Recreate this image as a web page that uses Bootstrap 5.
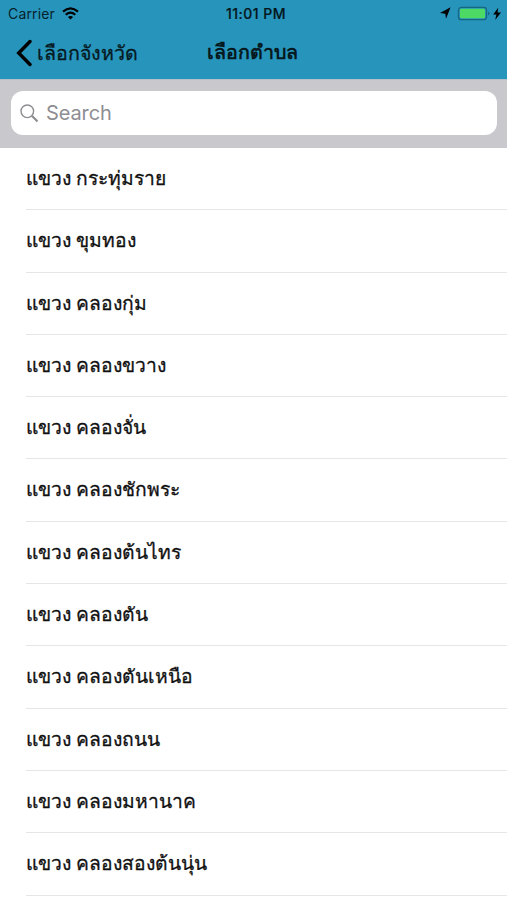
<!DOCTYPE html>
<html lang="th">
<head>
<meta charset="utf-8">
<meta name="viewport" content="width=device-width, initial-scale=1">
<title>เลือกตำบล</title>
<link rel="stylesheet" href="https://cdn.jsdelivr.net/npm/bootstrap@5.3.0/dist/css/bootstrap.min.css">
<style>
body{font-family:Inter,"Liberation Sans",sans-serif;height:900px;overflow:hidden;color:#111;background:#fff}
.top-area{background:#2795bb;height:79px;color:#000}
.status{height:27px;font-size:14px;line-height:27px;padding:0 5px 0 8px;color:#06222d;letter-spacing:.15px}
.wifi{margin-left:7px}
.clock{font-weight:500;letter-spacing:.5px;color:#04151c;padding-left:2px;-webkit-text-stroke:.2px currentColor}
.title-row{height:52px;padding-left:16px;color:#06191f}
.back-link{height:51px}
.back-label{font-size:19.6px;line-height:50px;padding-left:5px;-webkit-text-stroke:.3px currentColor}
.screen-title{font-size:19.6px;font-weight:700;line-height:50px;padding-left:69px}
.search-area{background:#c8c8cd;height:69px;padding:11px 10px 13px 11px;border-top:1px solid #b3bfc9}
.search-box{background:#fff;border-radius:12px;height:44px;padding-left:9px;color:#8e8e93}
.search-box input{font-size:20px;line-height:24px;margin:0 0 0 7px;letter-spacing:-.1px;color:#8e8e93;outline:0;background:none}
.search-box input::placeholder{color:#8e8e93;opacity:1}
.places{padding-left:25.5px}
.places .list-group-item{height:62.3px;padding:0;border:0;border-bottom:1px solid #e6e6e8;border-radius:0;font-size:19.25px;line-height:61px;color:#111;word-spacing:.4px;-webkit-text-stroke:.3px #111}
.places .list-group-item:last-child{border-bottom:1px solid #e6e6e8}
</style>
<script src="https://cdn.jsdelivr.net/npm/bootstrap@5.3.0/dist/js/bootstrap.bundle.min.js"></script>
</head>
<body>
<header class="top-area">
  <div class="status row g-0 align-items-center">
    <div class="col-4 d-flex align-items-center"><span>Carrier</span>
      <svg class="wifi" width="17" height="13" viewBox="0 0 17 13"><g fill="none" stroke="#000" stroke-width="2.1"><path d="M1 4.6Q8.5-2 16 4.6"/><path d="M3.7 7.7Q8.5 3.5 13.3 7.7"/></g><path d="M5.9 9.9Q8.5 7.9 11.1 9.9L8.5 12.6Z"/></svg>
    </div>
    <div class="col-4 text-center clock">11:01 PM</div>
    <div class="col-4 d-flex align-items-center justify-content-end">
      <svg width="62" height="15" viewBox="0 0 62 15"><path d="M10.6 1.3L6 12.8 5.3 7.7 0 7Z"/><rect x="18.5" y="1.3" width="28" height="12.4" rx="2.8" fill="none" stroke="#176783" stroke-width="1.3"/><rect x="20" y="2.8" width="25" height="9.4" rx="1.2" fill="#4cd964"/><path d="M48 5.4v4.2q1.5-.6 1.5-2.1T48 5.4Z" fill="#176783"/><path d="M58.2 1.8L53.2 8.5h3.2l-1.2 5.4L61 6.6h-3.4Z"/></svg>
    </div>
  </div>
  <nav class="title-row d-flex">
    <a href="#" class="d-flex align-items-center text-reset text-decoration-none back-link">
      <svg width="16" height="28" viewBox="0 0 16 28" fill="none" stroke="#000" stroke-width="3.4" stroke-linecap="round"><path d="M14 2.5L2.7 14 14 25.5"/></svg>
      <span class="back-label">เลือกจังหวัด</span>
    </a>
    <h1 class="screen-title mb-0">เลือกตำบล</h1>
  </nav>
</header>
<div class="search-area">
  <label class="search-box d-flex align-items-center">
    <svg width="19" height="19" viewBox="0 0 19 19" fill="none" stroke="#8e8e93"><circle cx="7.3" cy="7.3" r="6.3" stroke-width="1.4"/><path d="M11.8 11.8L17.5 17.5" stroke-width="2.2"/></svg>
    <input class="border-0 p-0 w-75" type="search" placeholder="Search">
  </label>
</div>
<ul class="list-group list-group-flush places">
  <li class="list-group-item">แขวง กระทุ่มราย</li>
  <li class="list-group-item">แขวง ขุมทอง</li>
  <li class="list-group-item">แขวง คลองกุ่ม</li>
  <li class="list-group-item">แขวง คลองขวาง</li>
  <li class="list-group-item">แขวง คลองจั่น</li>
  <li class="list-group-item">แขวง คลองชักพระ</li>
  <li class="list-group-item">แขวง คลองต้นไทร</li>
  <li class="list-group-item">แขวง คลองตัน</li>
  <li class="list-group-item">แขวง คลองตันเหนือ</li>
  <li class="list-group-item">แขวง คลองถนน</li>
  <li class="list-group-item">แขวง คลองมหานาค</li>
  <li class="list-group-item">แขวง คลองสองต้นนุ่น</li>
</ul>
</body>
</html>
